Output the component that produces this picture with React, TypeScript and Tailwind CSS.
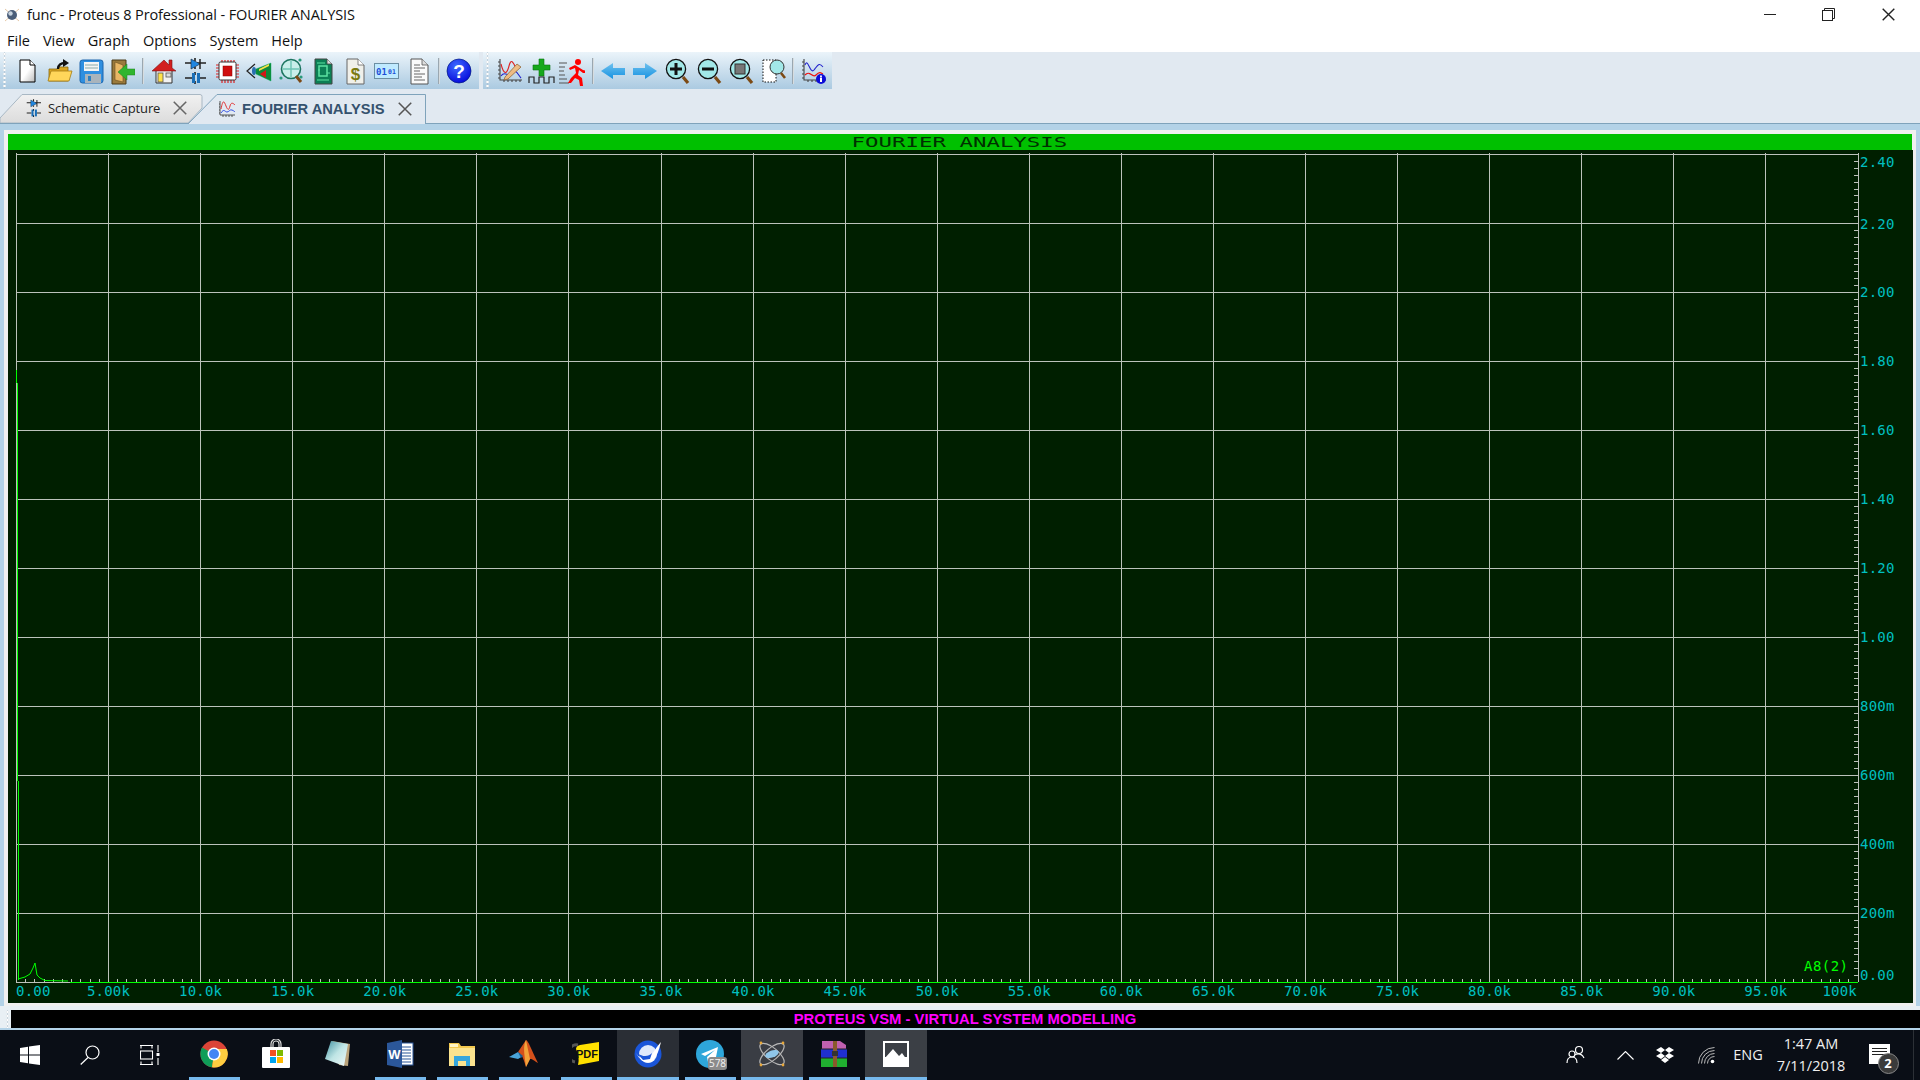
import React from "react";

const sans = "font-['Open_Sans','Noto_Sans',sans-serif]";

const Ic = ({ children, w = 28, h = 30 }: { children: React.ReactNode; w?: number; h?: number }) => (
  <svg width={w} height={h} viewBox={`0 0 ${w} ${h}`} className="shrink-0">{children}</svg>
);

const Slot = ({ children, cls = "" }: { children: React.ReactNode; cls?: string }) => (
  <div className={`w-[32px] h-full flex items-center justify-center shrink-0 ${cls}`}>{children}</div>
);

const Sep = () => <div className="w-[1px] h-[26px] bg-[#9aa7b0] mx-[3px] my-auto shrink-0 border-r border-white/60 box-content" />;

const Grip = () => (
  <div className="w-[3px] h-full ml-[3px] shrink-0 [background-image:radial-gradient(circle,#ffffff_1px,#a9b8c4_1.4px,transparent_1.6px)] [background-size:3px_4px]" />
);

const NewIcon = () => (
  <Ic><defs><linearGradient id="pg" x1="0" y1="0" x2="1" y2="1"><stop offset="0.5" stopColor="#fff" /><stop offset="1" stopColor="#bbb" /></linearGradient></defs>
    <path d="M7 4h10l5 5v17H7z" fill="url(#pg)" stroke="#000" strokeWidth="1" /><path d="M17 4v5h5" fill="#fff" stroke="#000" /></Ic>
);
const OpenIcon = () => (
  <Ic>
    <path d="M4 13h8l2-2h9v14H4z" fill="#d9a520" stroke="#8a6a10" strokeWidth=".8" />
    <path d="M3 25l3-10h21l-3 10z" fill="#ffd65a" stroke="#a47c12" strokeWidth=".8" />
    <path d="M13 13c0-4 3-6 7-6" fill="none" stroke="#111" strokeWidth="2.4" /><path d="M18 3l6 4-6 4z" fill="#111" />
  </Ic>
);
const SaveIcon = () => (
  <Ic>
    <rect x="3" y="4" width="23" height="23" rx="2.5" fill="#2f8fe0" stroke="#1c65ad" />
    <rect x="7" y="6" width="15" height="9" fill="#f4f4f4" /><path d="M8 9h13M8 12h13" stroke="#8aa" />
    <rect x="8" y="18" width="16" height="9" fill="#a9b4bc" /><rect x="11" y="20" width="3" height="5" fill="#2f7fc0" />
  </Ic>
);
const ExitIcon = () => (
  <Ic>
    <path d="M5 4h14v24H5z" fill="#9a7a3c" stroke="#4b3a18" /><path d="M8 6l8 3v17l-8-2z" fill="#e9b765" stroke="#6a4f20" strokeWidth=".6" />
    <path d="M28 13v6h-8v5l-9-8 9-8v5z" fill="#2fb52f" stroke="#1c801c" strokeWidth=".5" />
  </Ic>
);
const HomeIcon = () => (
  <Ic>
    <path d="M7 14h16v13H7z" fill="#f2f2f2" stroke="#333" /><path d="M3 15L15 4l5 5V4h3v8l4 3z" fill="#d21f1f" stroke="#7a1010" strokeWidth=".6" />
    <rect x="9" y="17" width="5" height="9" fill="#ffe14a" stroke="#555" strokeWidth=".8" /><rect x="17" y="17" width="5" height="4" fill="#ddd" stroke="#555" strokeWidth=".8" />
  </Ic>
);
const SchemIcon = ({ s = 1 }: { s?: number }) => (
  <svg width={28 * s} height={30 * s} viewBox="0 0 28 30" className="shrink-0">
    <path d="M14 2v3M4 7h8M16 7h9M14 11v2" stroke="#222" strokeWidth="1.6" fill="none" />
    <path d="M10 3l9 5-9 5z" fill="#1f86e0" stroke="#123" strokeWidth=".6" /><path d="M19 3v10" stroke="#222" strokeWidth="1.5" />
    <path d="M14 16v3M14 25v3M4 22h7M19 22h6" stroke="#222" strokeWidth="1.6" />
    <rect x="11" y="17" width="3" height="10" fill="#1a6fb8" /><rect x="16" y="17" width="3" height="10" fill="#1a6fb8" />
  </svg>
);
const ChipIcon = () => (
  <Ic>
    <path d="M9 4v23M12 4v23M15 4v23M18 4v23M21 4v23M3 9h23M3 12h23M3 15h23M3 18h23M3 21h23" stroke="#d22" strokeWidth="1.2" />
    <rect x="6" y="6" width="17" height="18" rx="1.5" fill="#fff" stroke="#333" /><rect x="10" y="10" width="9" height="10" fill="#d00e0e" stroke="#800" strokeWidth=".5" />
  </Ic>
);
const View3DIcon = () => (
  <Ic>
    <path d="M10 8L2 15l8 7" fill="none" stroke="#222" strokeWidth="1.2" /><ellipse cx="9" cy="15" rx="2" ry="4" fill="#2a6fb0" />
    <path d="M11 13l15-6v18l-15-7z" fill="#0d8a3a" stroke="#0a5" strokeWidth=".4" /><path d="M14 13l10-5v2l-10 5z" fill="#f5e04a" /><path d="M15 18l6-4v8z" fill="#d51616" />
  </Ic>
);
const FindIcon = () => (
  <Ic>
    <circle cx="14" cy="13" r="9.5" fill="#c9eeea" stroke="#1c7560" strokeWidth="1.6" /><path d="M6 13h16M14 5v16" stroke="#6cc3b4" strokeWidth="1.4" />
    <circle cx="4" cy="22" r="1.6" fill="#2a9a7c" /><circle cx="24" cy="21" r="1.6" fill="#2a9a7c" /><circle cx="23" cy="4" r="1.6" fill="#2a9a7c" />
    <path d="M19 20l5 6" stroke="#7b4a17" strokeWidth="3" />
  </Ic>
);
const PcbIcon = () => (
  <Ic>
    <path d="M6 3h12l5 5v20H6z" fill="#0b7f55" stroke="#444" /><path d="M18 3v5h5" fill="#ddd" stroke="#444" strokeWidth=".8" />
    <rect x="10" y="10" width="8" height="10" fill="none" stroke="#5de2a2" strokeWidth="1.5" /><path d="M8 7h8M8 24h12M9 14h2M18 17h3" stroke="#5de2a2" strokeWidth="1.2" />
  </Ic>
);
const DollarIcon = () => (
  <Ic>
    <path d="M6 3h11l6 6v19H6z" fill="#f0f0ea" stroke="#666" /><path d="M17 3v6h6" fill="#fff" stroke="#666" strokeWidth=".8" />
    <text x="14.5" y="24" textAnchor="middle" fontSize="17" fontWeight="700" fill="#7a7a10" fontFamily="Liberation Sans">$</text>
  </Ic>
);
const BinIcon = () => (
  <svg width="26" height="18" viewBox="0 0 26 18" className="shrink-0">
    <rect x=".5" y="1.5" width="24" height="15" fill="#bfeaff" stroke="#6c8fa3" />
    <text x="2" y="12.5" fontSize="9" fontWeight="700" fill="#1d4fd8" fontFamily="DejaVu Sans Mono">01</text><text x="14" y="11.5" fontSize="6.5" fontWeight="700" fill="#1d4fd8" fontFamily="DejaVu Sans Mono">01</text>
  </svg>
);
const DocIcon = () => (
  <Ic>
    <path d="M6 3h11l6 6v19H6z" fill="#fafafa" stroke="#555" /><path d="M17 3v6h6" fill="#ddd" stroke="#555" strokeWidth=".8" />
    <path d="M9 9h6M9 12h11M9 15h6M9 18h11M9 21h8M9 24h11" stroke="#666" strokeWidth="1.2" />
  </Ic>
);
const HelpIcon = () => (
  <svg width="26" height="26" viewBox="0 0 26 26" className="shrink-0">
    <defs><radialGradient id="hb" cx=".4" cy=".3" r=".8"><stop offset="0" stopColor="#3f6cff" /><stop offset="1" stopColor="#0000d8" /></radialGradient></defs>
    <circle cx="13" cy="13" r="12" fill="url(#hb)" stroke="#001a80" strokeWidth=".7" />
    <text x="13" y="19.5" textAnchor="middle" fontSize="19" fontWeight="700" fill="#fff" fontFamily="Liberation Sans">?</text>
  </svg>
);
const GraphBase = () => (
  <path d="M5 3v21h22M5 6h-2M5 10h-2M5 14h-2M5 18h-2M5 22h-2M9 24v2M13 24v2M17 24v2M21 24v2M25 24v2" stroke="#444" strokeWidth="1.1" fill="none" />
);
const GraphEditIcon = () => (
  <svg width="28" height="30" viewBox="0 0 28 30" className="shrink-0"><GraphBase />
    <path d="M6 8c3 12 6 10 8 2s4-4 7 2" fill="none" stroke="#d22" strokeWidth="1.1" /><path d="M6 20c4-6 7 2 11-3s6 2 9 5" fill="none" stroke="#22c" strokeWidth="1.1" />
    <path d="M10 21l12-13 4 3-13 12-4 1z" fill="#eebc84" stroke="#8a5c2a" strokeWidth=".7" />
  </svg>
);
const AddSignalIcon = () => (
  <Ic>
    <path d="M12 3h5v6h6v5h-6v6h-5v-6H6V9h6z" fill="#16a81c" stroke="#0c7411" strokeWidth=".6" />
    <path d="M2 27v-6h5v6h5v-6h5v6h5v-6h5v6" fill="none" stroke="#222" strokeWidth="1.2" />
  </Ic>
);
const RunIcon = () => (
  <Ic>
    <path d="M2 7h8M2 11h6M2 15h5M2 19h6M2 23h8M2 27h10" stroke="#555" strokeWidth="1.2" />
    <circle cx="21" cy="6" r="3" fill="#f00" /><path d="M18 9l-6 3 1 2 5-2 1 5-5 5-3 5h3l4-5 4 2 1 6h3l-1-8-4-3 1-5 4 3h4v-2l-4-1z" fill="#f00" />
  </Ic>
);
const ArrowIcon = ({ dir }: { dir: "l" | "r" }) => (
  <svg width="26" height="18" viewBox="0 0 26 18" className={dir === "r" ? "shrink-0 -scale-x-100" : "shrink-0"}>
    <defs><linearGradient id="ag" x1="0" y1="0" x2="0" y2="1"><stop offset="0" stopColor="#6fc1ee" /><stop offset="1" stopColor="#1592e2" /></linearGradient></defs>
    <path d="M1 9l12-8v5h12v7H13v4z" fill="url(#ag)" />
  </svg>
);
const Lens = ({ children }: { children?: React.ReactNode }) => (
  <svg width="28" height="30" viewBox="0 0 28 30" className="shrink-0">
    <circle cx="13" cy="13" r="9.6" fill="#a2e8e8" stroke="#111" strokeWidth="1.3" />{children}
    <path d="M20 21l5 6" stroke="#7c4a14" strokeWidth="3.2" />
  </svg>
);
const ZoomAreaIcon = () => (
  <svg width="28" height="30" viewBox="0 0 28 30" className="shrink-0">
    <rect x="2" y="4" width="13" height="22" fill="#fff" stroke="#111" strokeDasharray="1.5 1.5" />
    <circle cx="16" cy="11" r="7" fill="#a2e8e8" stroke="#333" /><path d="M20 17l4 5" stroke="#7c4a14" strokeWidth="2.6" />
  </svg>
);
const GraphInfoIcon = () => (
  <svg width="28" height="30" viewBox="0 0 28 30" className="shrink-0"><GraphBase />
    <path d="M6 9c3-8 5 10 9 5s5-8 9-3" fill="none" stroke="#22c" strokeWidth="1.1" /><path d="M6 19c5-6 7 4 11 0s5-2 7-1" fill="none" stroke="#e11" strokeWidth="1.2" />
    <circle cx="22" cy="23" r="5" fill="#0b0bd8" /><rect x="21" y="21.5" width="2" height="4.5" fill="#fff" /><rect x="21" y="19.5" width="2" height="1.4" fill="#fff" />
  </svg>
);
const FourierTabIcon = () => (
  <svg width="18" height="18" viewBox="0 0 18 18" className="shrink-0">
    <path d="M2 1v14h15M2 4H1M2 7H1M2 10H1M2 13H1M5 15v2M8 15v2M11 15v2M14 15v2" stroke="#444" strokeWidth=".9" fill="none" />
    <path d="M3 9c2-10 3-8 5-3s3 4 4 0 3-3 5-1" fill="none" stroke="#e02020" strokeWidth=".9" /><path d="M3 13c3-5 4-1 6-1s3-3 5-2 2 1 3 2" fill="none" stroke="#2040e0" strokeWidth=".9" />
  </svg>
);

const Close = ({ size = 13, color = "#666" }: { size?: number; color?: string }) => (
  <svg width={size} height={size} viewBox="0 0 13 13" className="shrink-0"><path d="M.7.7l11.6 11.6M12.3.7L.7 12.3" stroke={color} strokeWidth="1.4" /></svg>
);

const minX = 16.5, stepX = (1858 - 16.5) / 20, topY = 154, stepY = 69, botY = 982;
const xLabels = ["0.00", "5.00k", "10.0k", "15.0k", "20.0k", "25.0k", "30.0k", "35.0k", "40.0k", "45.0k", "50.0k", "55.0k", "60.0k", "65.0k", "70.0k", "75.0k", "80.0k", "85.0k", "90.0k", "95.0k"];
const yLabels: [string, number][] = [["2.40", 167], ["2.20", 229], ["2.00", 297], ["1.80", 366], ["1.60", 435], ["1.40", 504], ["1.20", 573], ["1.00", 642], ["800m", 711], ["600m", 780], ["400m", 849], ["200m", 918], ["0.00", 980]];

const Chart = () => {
  const vs = Array.from({ length: 21 }, (_, i) => Math.floor(minX + stepX * i) + 0.5);
  const hs = Array.from({ length: 13 }, (_, i) => topY + stepY * i + 0.5);
  const xt = Array.from({ length: 201 }, (_, i) => Math.floor(minX + (stepX / 10) * i) + 0.5);
  const yt = Array.from({ length: 121 }, (_, i) => Math.round(topY + (stepY / 10) * i) + 0.5);
  return (
    <svg viewBox="8 150 1905 853" className="w-[1905px] h-[853px] block bg-[#001f00]">
      <g stroke="#bcc2bb" strokeWidth="1" shapeRendering="crispEdges">
        {vs.map((x) => <line key={x} x1={x} x2={x} y1={153} y2={botY} />)}
        {hs.map((y) => <line key={y} x1={16} x2={1858} y1={y} y2={y} />)}
        {yt.map((y) => <line key={y} x1={1854} x2={1858} y1={y} y2={y} />)}
        {xt.map((x) => <line key={x} x1={x} x2={x} y1={979} y2={982} />)}
      </g>
      <line x1="16.5" x2="16.5" y1="370" y2="383" stroke="#00ff00" shapeRendering="crispEdges" />
      <line x1="17.5" x2="17.5" y1="383" y2="781" stroke="#00ff00" shapeRendering="crispEdges" />
      <line x1="18.5" x2="18.5" y1="781" y2="980" stroke="#00ff00" shapeRendering="crispEdges" />
      <polyline points="18,979 25,977 30,974 33,968 35,963 37,975 40,978 45,980.5 68,981" fill="none" stroke="#00ff00" strokeWidth="1" />
      <line x1="70" x2="1858" y1="982.5" y2="982.5" stroke="#00ff00" strokeWidth="1" shapeRendering="crispEdges" />
      <g fontFamily="'DejaVu Sans Mono', monospace" fontSize="14" letterSpacing="0.2" fill="#00c0c0">
        {xLabels.map((t, i) => (
          <text key={t} x={i === 0 ? 16 : minX + stepX * i} y={995.5} textAnchor={i === 0 ? "start" : "middle"}>{t}</text>
        ))}
        <text x={1857} y={995.5} textAnchor="end">100k</text>
        {yLabels.map(([t, y]) => <text key={t + y} x={1860} y={y}>{t}</text>)}
      </g>
      <text x={1804} y={971} fontFamily="'DejaVu Sans Mono', monospace" fontSize="14" fill="#00ff00" textLength={44} lengthAdjust="spacing">A8(2)</text>
    </svg>
  );
};

const TaskBtn = ({ children, under, bg, cls = "w-[62px]" }: { children: React.ReactNode; under?: boolean; bg?: string; cls?: string }) => (
  <div className={`${cls} h-full shrink-0 flex flex-col items-center ${bg ?? ""}`}>
    <div className="flex-1 flex items-center justify-center">{children}</div>
    <div className={under ? (bg ? "h-[3px] w-full bg-[#76b9ed]" : "h-[3px] w-[51px] bg-[#76b9ed]") : "h-[3px]"} />
  </div>
);

const Chrome = () => (
  <svg width="28" height="28" viewBox="0 0 28 28">
    <circle cx="14" cy="14" r="13.5" fill="#db4437" />
    <path d="M14 14L2 7.5A13.5 13.5 0 0 0 12 27.3z" fill="#0f9d58" /><path d="M14 14l-2 13.3A13.5 13.5 0 0 0 26.8 9H14z" fill="#ffcd40" />
    <circle cx="14" cy="14" r="6.5" fill="#fff" /><circle cx="14" cy="14" r="5" fill="#4285f4" />
  </svg>
);
const Store = () => (
  <svg width="30" height="30" viewBox="0 0 30 30">
    <path d="M10 9V5a5 5 0 0 1 10 0v4M12 9V5a3 3 0 0 1 6 0v4" fill="none" stroke="#ddd" strokeWidth="1.2" />
    <rect x="1" y="8" width="28" height="21" rx="1" fill="#fff" />
    <rect x="9" y="11" width="6" height="6" fill="#f25022" /><rect x="16" y="11" width="6" height="6" fill="#7fba00" /><rect x="9" y="18" width="6" height="6" fill="#00a4ef" /><rect x="16" y="18" width="6" height="6" fill="#ffb900" />
  </svg>
);
const Notepad = () => (
  <svg width="28" height="28" viewBox="0 0 28 28">
    <defs><linearGradient id="np" x1="0" y1="0" x2="1" y2="1"><stop offset="0" stopColor="#3d8f9f" /><stop offset=".5" stopColor="#bfe5e5" /><stop offset="1" stopColor="#f0f8f8" /></linearGradient></defs>
    <path d="M8 1l18 3-2 22-9-1z" fill="#b9a27a" /><path d="M7 1l17 3-4 22L1 19z" fill="url(#np)" />
  </svg>
);
const Word = () => (
  <svg width="28" height="28" viewBox="0 0 28 28">
    <rect x="12" y="3" width="15" height="22" fill="#fff" stroke="#2b579a" /><path d="M16 7h9M16 10h9M16 13h9M16 16h9M16 19h9M16 22h9" stroke="#2b579a" strokeWidth="1.2" />
    <path d="M1 3l15-3v28L1 25z" fill="#2b579a" /><text x="8.5" y="19" textAnchor="middle" fontSize="13" fontWeight="700" fill="#fff" fontFamily="Liberation Sans">W</text>
  </svg>
);
const Explorer = () => (
  <svg width="28" height="26" viewBox="0 0 28 26">
    <path d="M1 2h10l2 3h14v20H1z" fill="#f3c94f" /><rect x="1" y="7" width="26" height="18" fill="#fbe38e" /><rect x="2" y="3" width="8" height="3" fill="#fff4c4" />
    <path d="M6 15h16v10h-4v-5h-8v5H6z" fill="#36a6dc" />
  </svg>
);
const Matlab = () => (
  <svg width="30" height="28" viewBox="0 0 30 28">
    <path d="M0 17l9-5 5 4-5 3z" fill="#4aa3d8" /><path d="M9 12l8-12c2 0 5 9 12 23-4-2-5-4-8-4l-4 8c-2-6-3-12-8-15z" fill="#d3501b" /><path d="M17 0c-3 6-2 12 0 27l4-8z" fill="#f2a33a" /><path d="M9 12l5 4-2 2z" fill="#1c5b8f" />
  </svg>
);
const Pdf = () => (
  <svg width="28" height="24" viewBox="0 0 28 24">
    <path d="M6 3A8 8 0 0 0 3 20" fill="none" stroke="#555" strokeWidth="3" />
    <path d="M4 7q0-3 4-4l19-3v19l-21 4q2-8-2-16z" fill="#ffe000" /><text x="15" y="16" textAnchor="middle" fontSize="11" fontWeight="800" fill="#111" fontFamily="Liberation Sans">PDF</text>
  </svg>
);
const Crystal = () => (
  <svg width="28" height="28" viewBox="0 0 28 28">
    <circle cx="14" cy="14" r="13.5" fill="#1a55d8" /><circle cx="14" cy="14" r="9" fill="#dfe9fb" />
    <path d="M2 13c5 8 10 6 14 3s6-9 11-14c-2 8-4 14-8 19-6 4-13 0-17-8z" fill="#fff" /><path d="M3 13c7 5 12 3 15 0l-2 6-7 1z" fill="#1a55d8" />
  </svg>
);
const Telegram = () => (
  <div className="relative w-[28px] h-[28px]">
    <svg width="28" height="28" viewBox="0 0 28 28"><circle cx="14" cy="14" r="14" fill="#2ea6da" /><path d="M5 14l17-7-3 15-5-3-2 3-1-5 8-7-10 6z" fill="#fff" /></svg>
    <div className="absolute left-[12px] top-[17px] w-[19px] h-[13px] rounded-[3px] bg-[#8b8b8b] text-[#f4f4f4] text-[10px] leading-[13px] text-center font-['Open_Sans',sans-serif]">578</div>
  </div>
);
const Atom = () => (
  <svg width="28" height="28" viewBox="0 0 28 28" fill="none">
    <ellipse cx="14" cy="14" rx="15" ry="6" transform="rotate(40 14 14)" stroke="#b8b8b8" strokeWidth="1.2" /><ellipse cx="14" cy="14" rx="15" ry="6" transform="rotate(-40 14 14)" stroke="#b8b8b8" strokeWidth="1.2" />
    <ellipse cx="14" cy="14" rx="7" ry="3.5" transform="rotate(-20 14 14)" fill="#8fc6ea" />
    <circle cx="3" cy="3" r="1.4" fill="#e8a83a" /><circle cx="25" cy="3" r="1.4" fill="#e8a83a" /><circle cx="3" cy="25" r="1.4" fill="#e8a83a" /><circle cx="25" cy="25" r="1.4" fill="#e8a83a" />
  </svg>
);
const Winrar = () => (
  <svg width="28" height="28" viewBox="0 0 28 28">
    <path d="M2 1h18l6 4v4H2z" fill="#c060b0" /><rect x="1" y="9" width="26" height="9" fill="#2030d0" /><rect x="1" y="18" width="26" height="9" fill="#20b030" />
    <path d="M1 9h26M1 18h26" stroke="#222" /><rect x="13" y="1" width="4" height="26" fill="#8a5a2c" /><rect x="12" y="11" width="6" height="5" fill="#333" />
  </svg>
);
const Photos = () => (
  <svg width="26" height="26" viewBox="0 0 26 26">
    <rect width="26" height="26" fill="#fff" /><rect x="2" y="2" width="22" height="14" fill="#3b3f45" />
    <path d="M2 17l8-9 6 7 3-3 5 7v1H2z" fill="#fff" />
  </svg>
);

export default function App() {
  return (
    <div className={`w-[1920px] h-[1080px] overflow-hidden flex flex-col bg-white ${sans}`}>
      {/* title bar */}
      <div className="h-[26px] flex items-center bg-white text-[#111] shrink-0 pt-[4px]">
        <svg width="16" height="16" viewBox="0 0 16 16" className="ml-[4px] mr-[7px]">
          <path d="M1 2l14 12M15 2L1 14" stroke="#e6c9a8" /><circle cx="8" cy="8" r="5" fill="#4a5d78" /><circle cx="6.5" cy="6.5" r="2.2" fill="#c8d3de" />
        </svg>
        <span className="text-[14.5px] leading-none tracking-[-0.12px]">func - Proteus 8 Professional - FOURIER ANALYSIS</span>
        <div className="ml-auto flex items-center h-full pr-[2px] -translate-y-[1px]">
          <div className="w-[59px] flex justify-center"><div className="w-[12px] h-[1px] bg-[#222]" /></div>
          <div className="w-[59px] flex justify-center">
            <svg width="13" height="13" viewBox="0 0 13 13" fill="none" stroke="#222"><rect x=".5" y="2.5" width="10" height="10" fill="#fff" /><path d="M2.5 2.5v-2h10v10h-2" /></svg>
          </div>
          <div className="w-[60px] flex justify-center"><Close size={13} color="#222" /></div>
        </div>
      </div>
      {/* menu */}
      <div className="h-[26px] flex items-center pl-[7px] pt-[4px] gap-[13px] text-[14.5px] text-[#111] bg-white shrink-0">
        <span>File</span><span>View</span><span>Graph</span><span>Options</span><span>System</span><span>Help</span>
      </div>
      {/* toolbars */}
      <div className="h-[37px] flex bg-[#e1e9f1] shrink-0">
        <div className="flex h-full pr-[4px] bg-gradient-to-b from-[#ebf4fa] to-[#abcae1]">
          <Grip />
          <div className="flex h-full ml-[5px]">
            <Slot><NewIcon /></Slot><Slot><OpenIcon /></Slot><Slot><SaveIcon /></Slot><Slot cls="-translate-x-[2px]"><ExitIcon /></Slot>
            <Sep />
            <Slot><HomeIcon /></Slot><Slot><SchemIcon /></Slot><Slot><ChipIcon /></Slot><Slot><View3DIcon /></Slot><Slot><FindIcon /></Slot><Slot><PcbIcon /></Slot><Slot><DollarIcon /></Slot><Slot><BinIcon /></Slot><Slot><DocIcon /></Slot>
            <Sep />
            <Slot><HelpIcon /></Slot>
          </div>
        </div>
        <div className="flex h-full ml-[4px] pr-[3px] bg-gradient-to-b from-[#ebf4fa] to-[#abcae1]">
          <Grip />
          <div className="flex h-full ml-[4px]">
            <Slot><GraphEditIcon /></Slot><Slot><AddSignalIcon /></Slot><Slot cls="-translate-x-[2px]"><RunIcon /></Slot>
            <Sep />
            <Slot><ArrowIcon dir="l" /></Slot><Slot><ArrowIcon dir="r" /></Slot>
            <Slot><Lens><path d="M7 13h12M13 7v12" stroke="#111" strokeWidth="3" /></Lens></Slot>
            <Slot><Lens><path d="M7 13h12" stroke="#111" strokeWidth="3" /></Lens></Slot>
            <Slot><Lens><rect x="8" y="8" width="10" height="10" fill="#777" stroke="#333" /></Lens></Slot>
            <Slot cls="translate-x-[2px]"><ZoomAreaIcon /></Slot>
            <Sep />
            <Slot><GraphInfoIcon /></Slot>
          </div>
        </div>
      </div>
      {/* tabs */}
      <div className="h-[35px] flex items-end bg-[#e1e9f1] border-b border-[#7fa3bb] shrink-0">
        <div className="relative w-[204px] h-[29px] flex items-center pl-[24px] shrink-0">
          <svg className="absolute inset-0" width="204" height="29" viewBox="0 0 204 29">
            <defs><linearGradient id="t1" x1="0" y1="0" x2="0" y2="1"><stop offset="0" stopColor="#f1f1f1" /><stop offset="1" stopColor="#dcdcdc" /></linearGradient></defs>
            <path d="M0 24L22 .5H200q2 0 2 2V14L188 29H0z" fill="url(#t1)" stroke="#a9b8c4" />
          </svg>
          <div className="relative flex items-center">
            <SchemIcon s={0.68} />
            <span className="ml-[5px] text-[13px] text-[#222] tracking-[-0.1px]">Schematic Capture</span>
            <span className="ml-[13px]"><Close size={14} color="#666" /></span>
          </div>
        </div>
        <div className="relative -ml-[16px] w-[238px] h-[30px] flex items-center pl-[30px] shrink-0 -mb-[1px]">
          <svg className="absolute inset-0" width="238" height="30" viewBox="0 0 238 30">
            <path d="M0 30L29 .5H237.5V30" fill="#e1e9f1" stroke="#7fa3bb" />
          </svg>
          <div className="relative flex items-center">
            <FourierTabIcon />
            <span className="ml-[6px] text-[14.7px] font-['Liberation_Sans',sans-serif] font-bold text-[#35526e]">FOURIER ANALYSIS</span>
            <span className="ml-[13px]"><Close size={14} color="#555" /></span>
          </div>
        </div>
      </div>
      {/* body */}
      <div className="flex-1 flex flex-col bg-[#b3d2e7] min-h-0">
        <div className="mt-[6px] mx-[4px] p-[4px] pb-[3px] bg-[#f0f0f0]">
          <div className="h-[16px] bg-[#00c000] flex items-center justify-center">
            <span className="font-['DejaVu_Sans_Mono',monospace] font-normal text-[14px] leading-none text-[#003000] scale-x-[1.6] inline-block -translate-x-[1px]">FOURIER ANALYSIS</span>
          </div>
          <Chart />
        </div>
        <div className="h-[4px] bg-[#e8eff4]" />
        <div className="h-[18px] flex bg-[#e8eff4]">
          <div className="w-[11px] shrink-0 pl-[3px]"><Grip /></div>
          <div className="flex-1 bg-black flex items-center justify-center pr-[1px]">
            <span className="font-['Liberation_Sans',sans-serif] font-bold text-[14.8px] leading-none text-[#ff00ff]">PROTEUS VSM - VIRTUAL SYSTEM MODELLING</span>
          </div>
        </div>
        <div className="h-[2px] bg-[#b3d2e7]" />
      </div>
      {/* taskbar */}
      <div className="h-[50px] bg-[#0a0e16] flex items-stretch text-white shrink-0">
        <div className="w-[60px] flex items-center justify-center shrink-0">
          <svg width="20" height="20" viewBox="0 0 20 20" fill="#fff"><path d="M0 3l8-1.2V9.500H0zM9 1.600L20 0v9.500H9zM0 10.500h8v7.800L0 17zM9 10.500h11V20L9 18.400z" /></svg>
        </div>
        <div className="w-[60px] flex items-center justify-center shrink-0">
          <svg width="20" height="20" viewBox="0 0 20 20" fill="none" stroke="#fff" strokeWidth="1.2"><circle cx="12.500" cy="7.500" r="6.500" /><path d="M8 12.500L.7 19.500" /></svg>
        </div>
        <div className="w-[60px] flex items-center justify-center shrink-0">
          <svg width="20" height="20" viewBox="0 0 20 20" fill="none" stroke="#fff" strokeWidth="1.100"><path d="M0 .5h13M1 .5v3M12 .5v3M0 19.500h13M1 19.500v-3M12 19.500v-3" /><rect x=".5" y="6" width="12" height="8" /><path d="M18 0v7M18 13v7" /><rect x="16.500" y="8" width="3" height="3" fill="#fff" stroke="none" /></svg>
        </div>
        <div className="w-[3px] shrink-0" />
        <TaskBtn under><Chrome /></TaskBtn>
        <TaskBtn><Store /></TaskBtn>
        <TaskBtn><Notepad /></TaskBtn>
        <TaskBtn under><Word /></TaskBtn>
        <TaskBtn under><Explorer /></TaskBtn>
        <TaskBtn under><Matlab /></TaskBtn>
        <TaskBtn under><Pdf /></TaskBtn>
        <TaskBtn under bg="bg-[#2a2e35]"><Crystal /></TaskBtn>
        <TaskBtn under><Telegram /></TaskBtn>
        <TaskBtn under bg="bg-[#3a3d44]"><Atom /></TaskBtn>
        <TaskBtn under><Winrar /></TaskBtn>
        <TaskBtn under bg="bg-[#3b3f45]"><Photos /></TaskBtn>
        <div className="flex-1" />
        <div className="w-[58px] flex items-center justify-center shrink-0">
          <svg width="20" height="20" viewBox="0 0 20 20" fill="none" stroke="#fff" strokeWidth="1.200"><circle cx="13" cy="5" r="3.500" /><circle cx="6" cy="9" r="3" /><path d="M1 18c0-4 2-6 5-6s5 2 5 6M9 9.500c3-1 7-.5 9 3.500" /></svg>
        </div>
        <div className="w-[40px] flex items-center justify-center shrink-0">
          <svg width="17" height="9" viewBox="0 0 17 9" fill="none" stroke="#fff" strokeWidth="1.100"><path d="M.5 8.500l8-8 8 8" /></svg>
        </div>
        <div className="w-[40px] flex items-center justify-center shrink-0">
          <svg width="18" height="16" viewBox="0 0 18 16" fill="#fff"><path d="M5 0L0 3l5 3 4-3zM13 0L9 3l4 3 5-3zM0 9l5 3 4-3-4-3zM18 9l-5 3-4-3 4-3zM5 13l4-3 4 3-4 3z" /></svg>
        </div>
        <div className="w-[42px] flex items-center justify-center shrink-0">
          <svg width="17" height="17" viewBox="0 0 17 17" fill="none" stroke="#bbb" strokeWidth="1"><path d="M.5 16.500A16 16 0 0 1 16.500 .5M3.500 16.500A13 13 0 0 1 16.500 3.500M6.500 16.500A10 10 0 0 1 16.500 6.500M9.500 16.500A7 7 0 0 1 16.500 9.500" /><circle cx="14.500" cy="14.500" r="1.800" fill="#fff" stroke="none" /></svg>
        </div>
        <div className="w-[42px] flex items-center justify-center text-[14.500px] text-[#f0f0f0] shrink-0">ENG</div>
        <div className="w-[84px] flex flex-col items-center justify-center text-[14.500px] leading-[22px] text-[#f0f0f0] shrink-0 pb-[1px]">
          <span>1:47 AM</span>
          <span>7/11/2018</span>
        </div>
        <div className="w-[60px] flex items-center justify-center shrink-0">
          <div className="relative w-[21px] h-[20px] bg-white flex flex-col gap-[2px] pt-[4px] px-[3px] -translate-x-[4px] -translate-y-[1px]">
            <div className="h-[1px] bg-[#222]" /><div className="h-[1px] bg-[#222]" /><div className="h-[1px] bg-[#222]" />
            <div className="absolute left-[9px] top-[9px] w-[21px] h-[21px] rounded-full bg-[#3b3b3b] border border-[#888] text-white text-[13px] font-bold leading-[19px] text-center">2</div>
          </div>
        </div>
        <div className="w-[1px] bg-[#2c3036] shrink-0" />
        <div className="w-[6px] shrink-0" />
      </div>
    </div>
  );
}
